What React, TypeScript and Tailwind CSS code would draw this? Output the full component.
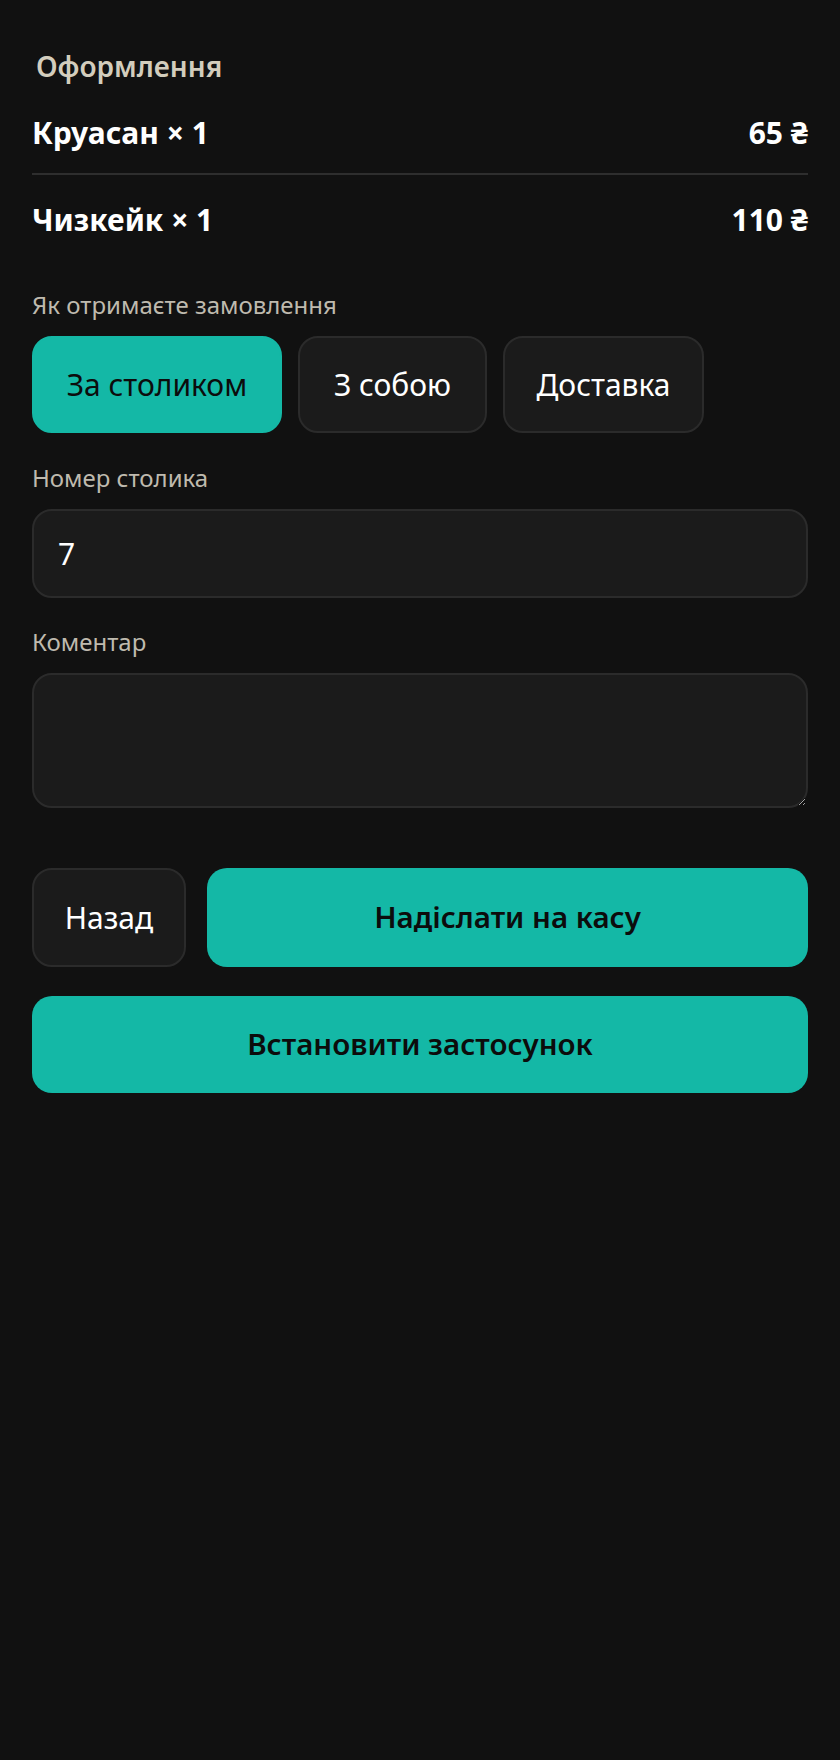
import * as React from "react"

const items = [
  { name: "Круасан", qty: 1, price: 65 },
  { name: "Чизкейк", qty: 1, price: 110 },
]

const modes = [
  { id: "table", label: "За столиком", width: "w-[250px]" },
  { id: "takeaway", label: "З собою", width: "w-[189px]" },
  { id: "delivery", label: "Доставка", width: "w-[201px]" },
]

export default function App() {
  const [mode, setMode] = React.useState("table")
  const [table, setTable] = React.useState("7")
  const [comment, setComment] = React.useState("")

  return (
    <div className="min-h-[1760px] bg-[#111111] px-8 pt-[49px] font-['Noto_Sans','DejaVu_Sans',sans-serif] text-white [color-scheme:dark]">
      <h2 className="pl-1 text-[28px] leading-[34px] font-semibold text-[#d3cdbd]">Оформлення</h2>

      {/* order lines */}
      <div className="mt-[10px]">
        {items.map((item, i) => (
          <div
            key={item.name}
            className={
              i === 0
                ? "flex items-center justify-between border-b-2 border-[#2e2e2e] py-[22px] text-[30px] leading-[36px] font-bold"
                : "flex items-center justify-between pt-[27px] text-[30px] leading-[36px] font-bold"
            }
          >
            <span>
              {item.name} × {item.qty}
            </span>
            <span>{item.price} ₴</span>
          </div>
        ))}
      </div>

      <div className="mt-[52px] text-[24px] leading-[30px] text-[#bfbaae]">Як отримаєте замовлення</div>
      <div className="mt-4 flex gap-4">
        {modes.map((m) => (
          <button
            key={m.id}
            onClick={() => setMode(m.id)}
            className={
              mode === m.id
                ? `${m.width} h-[97px] rounded-[20px] border-2 border-[#14b8a6] bg-[#14b8a6] text-[30px] text-[#0c0c0c]`
                : `${m.width} h-[97px] rounded-[20px] border-2 border-[#2b2b2b] bg-[#1b1b1b] text-[30px] text-white`
            }
          >
            {m.label}
          </button>
        ))}
      </div>

      <div className="mt-[30px] text-[24px] leading-[30px] text-[#bfbaae]">Номер столика</div>
      <input
        value={table}
        onChange={(e) => setTable(e.target.value)}
        className="mt-4 block h-[89px] w-full rounded-[20px] border-2 border-[#2b2b2b] bg-[#1b1b1b] px-6 text-[30px] text-white outline-none"
      />

      <div className="mt-[29px] text-[24px] leading-[30px] text-[#bfbaae]">Коментар</div>
      <textarea
        value={comment}
        onChange={(e) => setComment(e.target.value)}
        className="mt-4 block h-[135px] w-full rounded-[20px] border-2 border-[#2b2b2b] bg-[#1b1b1b] px-6 py-4 text-[30px] text-white outline-none"
      />

      <div className="mt-[60px] flex gap-[21px]">
        <button className="h-[99px] w-[154px] rounded-[20px] border-2 border-[#2b2b2b] bg-[#1b1b1b] text-[30px] text-white">
          Назад
        </button>
        <button className="h-[99px] flex-1 rounded-[20px] bg-[#14b8a6] text-[29.5px] font-semibold text-[#0c0c0c]">
          Надіслати на касу
        </button>
      </div>

      <button className="mt-[29px] block h-[97px] w-full rounded-[20px] bg-[#14b8a6] text-[29.5px] font-semibold text-[#0c0c0c]">
        Встановити застосунок
      </button>
    </div>
  )
}
